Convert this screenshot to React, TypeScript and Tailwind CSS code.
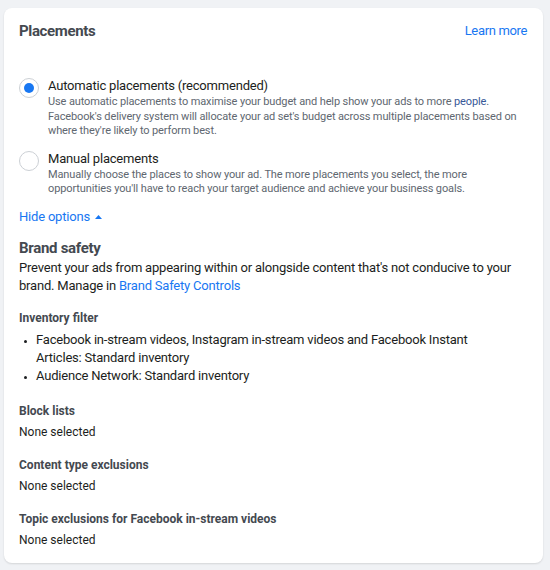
import React from "react";

function Radio({ checked }: { checked: boolean }) {
  return (
    <div className="w-5 h-5 rounded-full border border-[#ccd0d5] bg-white flex items-center justify-center shrink-0">
      {checked && <div className="w-[10px] h-[10px] rounded-full bg-[#1877f2]" />}
    </div>
  );
}

function Field({ label, value, first }: { label: string; value: string; first?: boolean }) {
  return (
    <div className={first ? "mt-[15px]" : "mt-[12px]"}>
      <div className="text-[12px] font-bold text-[#444950] leading-[22px]">{label}</div>
      <div className="text-[12px] text-[#1c1e21] leading-[20px]">{value}</div>
    </div>
  );
}

export default function App() {
  return (
    <div
      className="w-[550px] h-[570px] bg-[#f0f2f5] pt-2 pl-1 pr-[7px]"
      style={{ fontFamily: "Roboto, 'Liberation Sans', sans-serif" }}
    >
      <div className="bg-white rounded-lg shadow-[0_1px_2px_rgba(0,0,0,0.12)] px-[15px] pt-[13px] pb-[20px] h-[555px]">
        <div className="flex justify-between items-center">
          <h2 className="text-[15px] font-bold text-[#444950] leading-[20px] tracking-[-0.35px]">Placements</h2>
          <a className="text-[13px] text-[#1877f2] tracking-[-0.35px] mr-[1px]">Learn more</a>
        </div>

        <div className="mt-[36px] flex gap-[9px]">
          <div className="pt-[1px]">
            <Radio checked />
          </div>
          <div>
            <div className="text-[13px] text-[#1c1e21] leading-[18px] tracking-[-0.2px]">
              Automatic placements (recommended)
            </div>
            <p className="text-[11px] text-[#606770] leading-[14.5px] tracking-[-0.12px]">
              Use automatic placements to maximise your budget and help show your ads to more{" "}
              <span className="text-[#385898]">people</span>. Facebook's delivery system will allocate your ad set's
              budget across multiple placements based on where they're likely to perform best.
            </p>
          </div>
        </div>

        <div className="mt-[11px] flex gap-[9px]">
          <div className="pt-[1px]">
            <Radio checked={false} />
          </div>
          <div>
            <div className="text-[13px] text-[#1c1e21] leading-[18px] tracking-[-0.2px]">Manual placements</div>
            <p className="text-[11px] text-[#606770] leading-[14.5px] tracking-[-0.12px]">
              Manually choose the places to show your ad. The more placements you select, the more opportunities
              you'll have to reach your target audience and achieve your business goals.
            </p>
          </div>
        </div>

        <div className="mt-[10px] flex items-center gap-[5px] text-[13px] text-[#1877f2] leading-[20px] tracking-[-0.2px]">
          Hide options
          <svg width="7" height="4" viewBox="0 0 7 4">
            <path d="M0 4 L3.5 0 L7 4 Z" fill="#1877f2" />
          </svg>
        </div>

        <div className="mt-[11px]">
          <div className="text-[15px] font-bold text-[#444950] leading-[20px] tracking-[-0.3px]">Brand safety</div>
          <p className="mt-[1px] text-[13px] text-[#1c1e21] leading-[18px] tracking-[-0.2px]">
            Prevent your ads from appearing within or alongside content that's not conducive to your brand. Manage
            in <span className="text-[#1877f2]">Brand Safety Controls</span>
          </p>
        </div>

        <div className="mt-[13px]">
          <div className="text-[12px] font-bold text-[#444950] leading-[20px]">Inventory filter</div>
          <ul className="mt-[3px] pr-[40px] text-[13px] text-[#1c1e21] leading-[18px] tracking-[-0.2px] list-disc pl-[17px] marker:text-[9px]">
            <li>Facebook in-stream videos, Instagram in-stream videos and Facebook Instant Articles: Standard inventory</li>
            <li>Audience Network: Standard inventory</li>
          </ul>
        </div>

        <Field first label="Block lists" value="None selected" />
        <Field label="Content type exclusions" value="None selected" />
        <Field label="Topic exclusions for Facebook in-stream videos" value="None selected" />
      </div>
    </div>
  );
}
